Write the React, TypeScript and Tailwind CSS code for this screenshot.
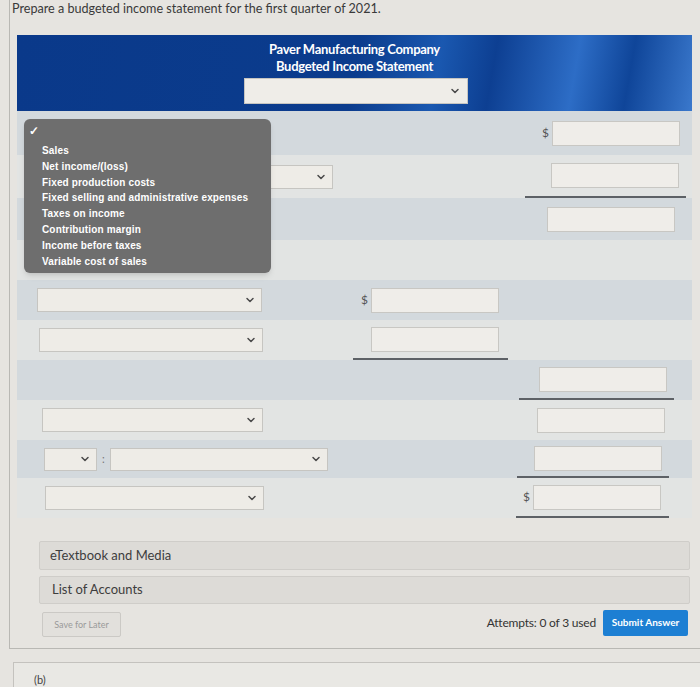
import { ChevronDown } from "lucide-react";

// One row of the statement grid. Offsets are in px, measured off the screenshot.
type Row = {
  h: number;
  dark: boolean;
  selects?: { pl: number; w: number }[];
  small?: boolean;
  mid?: { dollar?: boolean; underline?: boolean };
  right?: { dollar?: boolean; underline?: boolean; cl: number; cr: number; pr: number };
};

const rows: Row[] = [
  { h: 44, dark: true, right: { dollar: true, cl: 10, cr: 6, pr: 6 } },
  { h: 43, dark: false, selects: [{ pl: 23, w: 293 }], right: { underline: true, cl: 10, cr: 6, pr: 7 } },
  { h: 42, dark: true, right: { cl: 10, cr: 8, pr: 9 } },
  { h: 40, dark: false },
  { h: 40, dark: true, selects: [{ pl: 20, w: 225 }], mid: { dollar: true } },
  { h: 40, dark: false, selects: [{ pl: 22, w: 224 }], mid: { underline: true } },
  { h: 40, dark: true, right: { underline: true, cl: 4, cr: 18, pr: 7 } },
  { h: 40, dark: false, selects: [{ pl: 25, w: 221 }], right: { cl: 4, cr: 20, pr: 7 } },
  { h: 38, dark: true, small: true, right: { underline: true, cl: 2, cr: 23, pr: 7 } },
  { h: 40, dark: false, selects: [{ pl: 28, w: 219 }], right: { dollar: true, underline: true, cl: 1, cr: 23, pr: 8 } },
];

const menu = [
  "Sales",
  "Net income/(loss)",
  "Fixed production costs",
  "Fixed selling and administrative expenses",
  "Taxes on income",
  "Contribution margin",
  "Income before taxes",
  "Variable cost of sales",
];

const Select = ({ w, h = 24 }: { w: number; h?: number }) => (
  <div
    className="flex items-center justify-end pr-[5px] bg-[#eeece7] border border-[#c6c5c1] shrink-0"
    style={{ width: w, height: h }}
  >
    <ChevronDown size={12} strokeWidth={3} className="text-[#4a4a4a]" />
  </div>
);

const Input = () => (
  <div className="w-[128px] h-[25px] bg-[#efede9] border border-[#c8c7c3] shrink-0" />
);

const Dollar = () => <span className="text-[12px] text-[#555] mr-[3px]">$</span>;

const StatementRow = ({ r }: { r: Row }) => (
  <div
    className={`flex ${r.dark ? "bg-[#d3d9dd]" : "bg-[#e2e4e3]"}`}
    style={{ height: r.h }}
  >
    {/* label column */}
    <div className="w-[323px] flex items-center">
      {r.selects?.map((s, i) => (
        <div key={i} style={{ paddingLeft: s.pl }}>
          <Select w={s.w} />
        </div>
      ))}
      {r.small && (
        <div className="flex items-center pl-[27px]">
          <Select w={53} h={23} />
          <span className="text-[11px] text-[#777] mx-[5px]">:</span>
          <Select w={218} h={23} />
        </div>
      )}
    </div>
    {/* first amount column */}
    <div className="w-[175px] flex">
      {r.mid && (
        <div
          className={`ml-[13px] w-[155px] flex items-center justify-end pr-[9px] ${
            r.mid.underline ? "border-b-2 border-[#5d6166]" : ""
          }`}
        >
          {r.mid.dollar && <Dollar />}
          <Input />
        </div>
      )}
    </div>
    {/* second amount column */}
    <div className="flex-1 flex">
      {r.right && (
        <div
          className={`flex-1 flex items-center justify-end ${
            r.right.underline ? "border-b-2 border-[#5d6166]" : ""
          }`}
          style={{ marginLeft: r.right.cl, marginRight: r.right.cr, paddingRight: r.right.pr }}
        >
          {r.right.dollar && <Dollar />}
          <Input />
        </div>
      )}
    </div>
  </div>
);

export default function App() {
  return (
    <div className="w-[700px] h-[687px] overflow-hidden bg-[#e6e4e0] font-['Lato',sans-serif]">
      <div className="ml-[9px] h-[649px] border-l border-b border-[#b9b8b4]">
        <p className="pl-[2px] h-[20px] leading-[18px] text-[12.6px] text-[#3a3a3a]">
          Prepare a budgeted income statement for the first quarter of 2021.
        </p>

        <div className="mt-[15px] ml-[7px] w-[675px]">
          <div className="h-[76px] flex flex-col items-center pt-[6px] bg-[linear-gradient(100deg,#0a398a_0%,#0b3c8d_50%,#1a58b0_62%,#0d3f92_70%,#2d6dc6_82%,#0f4599_90%,#3a78cc_100%)]">
            <div className="text-white font-bold text-[13px] leading-[17px] tracking-[-0.3px] text-center">
              <div>Paver Manufacturing Company</div>
              <div>Budgeted Income Statement</div>
            </div>
            <div className="mt-[3px] ml-[3px] w-[224px] h-[26px] flex items-center justify-end pr-[6px] bg-[#efede8] border border-[#c6c5c1]">
              <ChevronDown size={12} strokeWidth={3} className="text-[#4a4a4a]" />
            </div>
          </div>

          <div className="relative">
            {rows.map((r, i) => (
              <StatementRow key={i} r={r} />
            ))}

            {/* open dropdown menu */}
            <div className="absolute left-[7px] top-[8px] w-[247px] h-[154px] rounded-[6px] bg-[#6e6e6e] shadow-md font-['Liberation_Sans',sans-serif] text-white">
              <div className="pl-[5px] pt-[5px] text-[12px] leading-[14px] font-bold">✓</div>
              <ul className="pl-[18px] pt-[5px]">
                {menu.map((m) => (
                  <li key={m} className="text-[10px] leading-[15.8px] font-bold tracking-[0.15px]">
                    {m}
                  </li>
                ))}
              </ul>
            </div>
          </div>
        </div>

        <div className="ml-[29px] w-[651px] mt-[23px] h-[29px] flex items-center pl-[10px] bg-[#dddbd7] border border-[#cfcdc9] rounded-[2px] text-[13px] text-[#3d3d3d]">
          eTextbook and Media
        </div>
        <div className="ml-[29px] w-[651px] mt-[6px] h-[28px] flex items-center pl-[12px] bg-[#dddbd7] border border-[#cfcdc9] rounded-[2px] text-[13px] text-[#3d3d3d]">
          List of Accounts
        </div>

        <div className="ml-[29px] w-[651px] mt-[8px] flex items-center justify-between">
          <button className="ml-[3px] w-[79px] h-[25px] flex items-center justify-center border border-[#cbc9c5] rounded-[2px] bg-[#e2e0dc] text-[9px] text-[#9a9a9a]">
            Save for Later
          </button>
          <div className="flex items-center gap-[7px] -mt-[4px]">
            <span className="text-[12px] text-[#333] tracking-[-0.2px]">Attempts: 0 of 3 used</span>
            <button className="w-[85px] h-[26px] mr-[2px] rounded-[2px] bg-[#1d7fd3] text-white text-[10px] font-bold">
              Submit Answer
            </button>
          </div>
        </div>
      </div>

      <div className="mt-[13px] ml-[13px] h-[40px] border-t border-l border-[#c4c2be] bg-[#e9e8e4] pl-[20px] pt-[10px] text-[11px] leading-[13px] text-[#444]">
        (b)
      </div>
    </div>
  );
}
